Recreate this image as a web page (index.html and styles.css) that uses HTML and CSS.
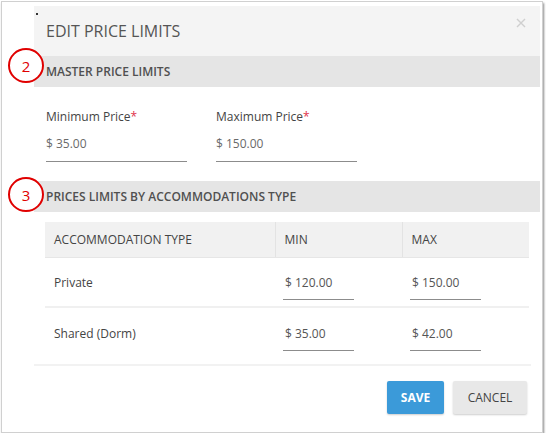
FILE: index.html
```html
<!DOCTYPE html>
<html>
<head>
<meta charset="utf-8">
<link rel="stylesheet" href="styles.css">
</head>
<body>
<div class="frame">
  <div class="dialog">
    <div class="dlg-header">
      <span class="dot"></span>
      <h1 class="title">EDIT PRICE LIMITS</h1>
      <svg class="close" width="10" height="10" viewBox="0 0 10 10"><path d="M1 1L9 9M9 1L1 9" stroke="#cfcfcf" stroke-width="1.4" fill="none"/></svg>
    </div>
    <div class="section">MASTER PRICE LIMITS</div>
    <div class="fields">
      <div class="field">
        <div class="label">Minimum Price<span class="req">*</span></div>
        <div class="value">$ 35.00</div>
      </div>
      <div class="field">
        <div class="label">Maximum Price<span class="req">*</span></div>
        <div class="value">$ 150.00</div>
      </div>
    </div>
    <div class="section">PRICES LIMITS BY ACCOMMODATIONS TYPE</div>
    <table class="grid">
      <thead>
        <tr><th class="c1">ACCOMMODATION TYPE</th><th class="c2">MIN</th><th class="c3">MAX</th></tr>
      </thead>
      <tbody>
        <tr class="r1"><td>Private</td><td><div class="cell-input">$ 120.00</div></td><td><div class="cell-input">$ 150.00</div></td></tr>
        <tr class="r2"><td>Shared (Dorm)</td><td><div class="cell-input">$ 35.00</div></td><td><div class="cell-input">$ 42.00</div></td></tr>
      </tbody>
    </table>
    <div class="footer">
      <button class="btn save">SAVE</button>
      <button class="btn cancel">CANCEL</button>
    </div>
  </div>
  <div class="badge b2">2</div>
  <div class="badge b3">3</div>
</div>
</body>
</html>
```

FILE: styles.css
```css
* { box-sizing: border-box; }
html, body { margin: 0; padding: 0; background: #fff; }
body { font-family: "Open Sans", "Liberation Sans", sans-serif; color: #444; }

.frame {
  position: relative;
  margin: 1px 0 0 1px;
  width: 542px;
  height: 432px;
  border: 1px solid #d0d0d0;
  box-shadow: 1px 2px 2px rgba(0,0,0,0.45);
  padding: 4px 2px 0 32px;
  background: #fff;
}

.dialog { width: 506px; }

.dlg-header {
  position: relative;
  height: 50px;
  background: #f4f4f4;
  display: flex;
  align-items: center;
  padding-left: 12px;
}
.dot {
  position: absolute;
  left: 2px; top: 7px;
  width: 2px; height: 2px;
  background: #333;
}
.title {
  margin: 0;
  font-size: 16px;
  font-weight: 400;
  color: #555;
}
.close {
  position: absolute;
  right: 14px; top: 12px;
}

.section {
  height: 31px;
  background: #e5e5e5;
  display: flex;
  align-items: center;
  padding-left: 12px;
  font-size: 12px;
  font-weight: 600;
  color: #505050;
}

.fields {
  display: flex;
  gap: 29px;
  padding: 21px 0 20px 12px;
  height: 94px;
}
.field { width: 141px; }
.label { font-size: 12px; color: #444; line-height: 18px; }
.req { color: #e0324b; }
.value {
  margin-top: 9px;
  font-size: 12px;
  color: #6a6a6a;
  line-height: 18px;
  padding-bottom: 8px;
  border-bottom: 1px solid #8c8c8c;
}

.grid {
  margin: 10px 0 0 11px;
  width: 484px;
  border-collapse: collapse;
  font-size: 12px;
}
.grid th {
  background: #f1f1f1;
  height: 35px;
  text-align: left;
  font-weight: 400;
  color: #444;
  padding: 0 0 0 9px;
  border-bottom: 1px solid #e6e6e6;
}
.grid th.c1 { width: 230px; }
.grid th.c2 { width: 127px; border-left: 1px solid #e3e3e3; }
.grid th.c3 { width: 127px; border-left: 1px solid #e3e3e3; }
.grid td {
  padding: 0 0 0 9px;
  color: #444;
  vertical-align: top;
}
.grid td + td { padding-left: 8px; }
.grid tr.r1 td { height: 50px; border-bottom: 2px solid #f0f0f0; padding-top: 16px; }
.grid tr.r2 td { height: 50px; padding-top: 17px; }
.cell-input {
  width: 71px;
  padding: 0 0 7px 2px;
  line-height: 18px;
  color: #555;
  border-bottom: 1px solid #8c8c8c;
}

.footer {
  margin: 7px 9px 0 0;
  border-top: 2px solid #f2f2f2;
  display: flex;
  justify-content: flex-end;
  gap: 9px;
  padding: 15px 4px 0 0;
}
.btn {
  height: 33px;
  border: none;
  border-radius: 2px;
  font-family: "Open Sans", "Liberation Sans", sans-serif;
  font-size: 12px;
  cursor: pointer;
}
.save {
  width: 57px;
  background: #3b9ad9;
  color: #fff;
  font-weight: 700;
  box-shadow: 0 1px 2px rgba(0,0,0,0.2);
}
.cancel {
  width: 74px;
  background: #e8e8e8;
  color: #444;
  font-weight: 400;
  box-shadow: 0 1px 2px rgba(0,0,0,0.2);
}

.badge {
  position: absolute;
  left: 6px;
  width: 36px;
  height: 35px;
  border: 2.5px solid #e00000;
  border-radius: 50%;
  color: #e00000;
  font-size: 15px;
  display: flex;
  align-items: center;
  justify-content: center;
  background: #fff;
  font-family: "Open Sans", "Liberation Sans", sans-serif;
}
.b2 { top: 46px; }
.b3 { top: 175px; }
```
